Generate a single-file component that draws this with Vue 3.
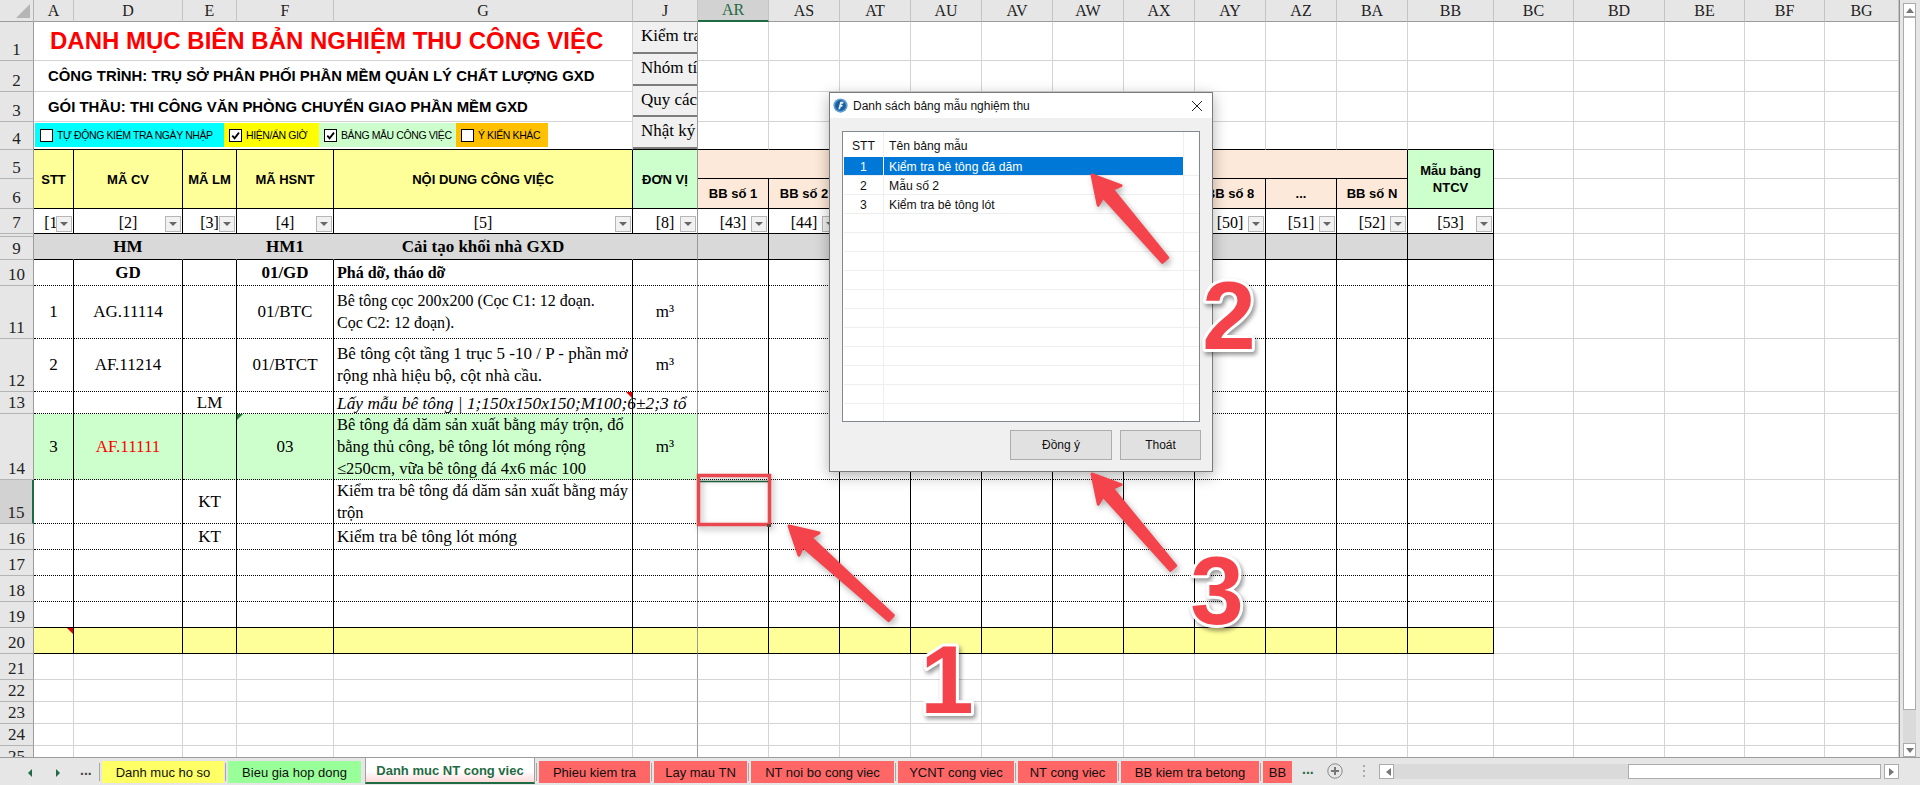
<script setup>
const colNames = ['', 'A', 'D', 'E', 'F', 'G', 'J', 'AR', 'AS', 'AT', 'AU', 'AV', 'AW', 'AX', 'AY', 'AZ', 'BA', 'BB', 'BC', 'BD', 'BE', 'BF', 'BG']
const rowLabels = ['', 1, 2, 3, 4, 5, 6, 7, 9, 10, 11, 12, 13, 14, 15, 16, 17, 18, 19, 20, 21, 22, 23, 24, 25]

const bbLabels = ['BB số 1', 'BB số 2', 'BB số 3', 'BB số 4', 'BB số 5', 'BB số 6', 'BB số 7', 'BB số 8', '...', 'BB số N']
const idx = ['[1]', '[2]', '[3]', '[4]', '[5]', '[8]', '[43]', '[44]', '[45]', '[46]', '[47]', '[48]', '[49]', '[50]', '[51]', '[52]', '[53]']

const body = {
  9: { cls: 'b', 3: 'HM', 5: 'HM1', 6: 'Cải tạo khối nhà GXD' },
  10: { cls: 'b', 3: 'GD', 5: '01/GD', 6: ['Phá dỡ, tháo dỡ'] },
  11: { 2: '1', 3: 'AG.11114', 5: '01/BTC', 6: ['Bê tông cọc 200x200 (Cọc C1: 12 đoạn.', 'Cọc C2: 12 đoạn).'], 7: 'm³' },
  12: { 2: '2', 3: 'AF.11214', 5: '01/BTCT', 6: ['Bê tông cột tầng 1 trục 5 -10 / P - phần mở', 'rộng nhà hiệu bộ, cột nhà cầu.'], 7: 'm³' },
  13: { 4: 'LM', 6: ['Lấy mẫu bê tông | 1;150x150x150;M100;6±2;3 tổ'] },
  14: { 2: '3', 3: 'AF.11111', 5: '03', 6: ['Bê tông đá dăm sản xuất bằng máy trộn, đổ', 'bằng thủ công, bê tông lót móng rộng', '≤250cm, vữa bê tông đá 4x6 mác 100'], 7: 'm³' },
  15: { 4: 'KT', 6: ['Kiểm tra bê tông đá dăm sản xuất bằng máy', 'trộn'] },
  16: { 4: 'KT', 6: ['Kiểm tra bê tông lót móng'] },
}
const gSize = { 10: 'g16', 11: 'g16', 12: 'g17', 13: 'g174', 14: 'g165', 15: 'g165', 16: 'g17' }

function borders(r, c) {
  const out = []
  if (c === 7) out.push('freeze')
  else if (r >= 6 && r <= 20 && c >= 2 && c <= 18) out.push(r === 9 && c < 7 ? 'nor' : 'vr')
  if (r >= 5 && r <= 9 && c >= 2 && c <= 18) out.push('hs')
  if ((r === 19 || r === 20) && c >= 2 && c <= 18) out.push('hs')
  if (r >= 10 && r <= 18 && c >= 2 && c <= 18) out.push('hd')
  return out
}

function cell(r, c, extra = {}) {
  const { cs = 1, rs = 1 } = extra
  const endC = c + cs - 1
  const endR = r + rs - 1
  return {
    key: r + '-' + c,
    pos: { gridColumn: c + ' / span ' + cs, gridRow: r + ' / span ' + rs },
    cls: [...borders(endR, endC), ...(extra.cls || [])],
    text: extra.text,
    lines: extra.lines,
    kind: extra.kind,
    dd: extra.dd,
  }
}

const colHeads = colNames.slice(1).map((name, i) => ({
  key: 'h' + i,
  name,
  pos: { gridColumn: i + 2, gridRow: 1 },
  active: name === 'AR',
}))
const rowHeads = rowLabels.slice(1).map((label, i) => ({
  label,
  pos: { gridRow: i + 2, gridColumn: 1 },
  active: label === 15,
}))

function buildBody() {
  const list = []
  list.push(cell(2, 2, { cs: 5, kind: 'title', text: 'DANH MỤC BIÊN BẢN NGHIỆM THU CÔNG VIỆC' }))
  list.push(cell(3, 2, { cs: 5, kind: 'sub', text: 'CÔNG TRÌNH: TRỤ SỞ PHÂN PHỐI PHẦN MỀM QUẢN LÝ CHẤT LƯỢNG GXD' }))
  list.push(cell(4, 2, { cs: 5, kind: 'sub', text: 'GÓI THẦU: THI CÔNG VĂN PHÒNG CHUYỂN GIAO PHẦN MỀM GXD' }))
  list.push(cell(5, 2, { cs: 5, kind: 'chips' }))
  list.push(cell(2, 7, { rs: 4, kind: 'buttons' }))
  ;['STT', 'MÃ CV', 'MÃ LM', 'MÃ HSNT', 'NỘI DUNG CÔNG VIỆC'].forEach((t, i) => {
    list.push(cell(6, i + 2, { rs: 2, text: t, cls: ['hd-cell', 'yellow'] }))
  })
  list.push(cell(6, 7, { rs: 2, text: 'ĐƠN VỊ', cls: ['hd-cell', 'green'] }))
  list.push(cell(6, 8, { cs: 10, cls: ['peach'] }))
  bbLabels.forEach((t, i) => list.push(cell(7, 8 + i, { text: t, cls: ['hd-cell', 'peach'] })))
  list.push(cell(6, 18, { rs: 2, lines: ['Mẫu bảng', 'NTCV'], cls: ['hd-cell', 'green'] }))
  idx.forEach((t, i) => {
    list.push(cell(8, i + 2, { text: t, dd: true, cls: ['cen', 'serif', 'idx'] }))
  })
  for (let r = 9; r <= 20; r++) {
    const data = body[r] || {}
    for (let c = 2; c <= 18; c++) {
      const v = data[c]
      const cls = []
      if (r === 9) cls.push('gray')
      if (r === 14 && c <= 7) cls.push('green')
      if (r === 20) cls.push('yellow')
      if (data.cls) cls.push(data.cls)
      if (r === 13 && c === 6) cls.push('ital', 'tri-red-r')
      if (r === 14 && c === 5) cls.push('tri-green')
      if (r === 14 && c === 3) cls.push('redtext')
      if (r === 20 && c === 2) cls.push('tri-red-r')
      if (Array.isArray(v)) list.push(cell(r, c, { lines: v, cls: [...cls, 'left', 'serif', gSize[r]] }))
      else list.push(cell(r, c, { text: v, cls: [...cls, 'cen', 'serif', 'g17'] }))
    }
  }
  for (let r = 2; r <= 25; r++) {
    for (let c = 8; c <= 23; c++) {
      if (r >= 6 && r <= 20 && c <= 18) continue
      list.push(cell(r, c))
    }
  }
  for (let r = 21; r <= 25; r++) {
    for (let c = 2; c <= 7; c++) list.push(cell(r, c))
  }
  for (let r = 6; r <= 20; r++) {
    for (let c = 19; c <= 23; c++) list.push(cell(r, c))
  }
  return list
}
const bodyCells = buildBody()

const chips = [
  { text: 'TỰ ĐỘNG KIỂM TRA NGÀY NHẬP', on: false, cls: 'cy' },
  { text: 'HIỆN/ẨN GIỜ', on: true, cls: 'ye' },
  { text: 'BẢNG MẪU CÔNG VIỆC', on: true, cls: 'gr' },
  { text: 'Ý KIẾN KHÁC', on: false, cls: 'or' },
]
const sideButtons = ['Kiểm tra ngày', 'Nhóm tính', 'Quy cách', 'Nhật ký']

const tabs = [
  { t: 'Danh muc ho so', w: 122, c: 'ty' },
  { t: 'Bieu gia hop dong', w: 133, c: 'tg' },
  { t: 'Danh muc NT cong viec', w: 170, c: 'ta' },
  { t: 'Phieu kiem tra', w: 111, c: 'tr' },
  { t: 'Lay mau TN', w: 93, c: 'tr' },
  { t: 'NT noi bo cong viec', w: 143, c: 'tr' },
  { t: 'YCNT cong viec', w: 116, c: 'tr' },
  { t: 'NT cong viec', w: 99, c: 'tr' },
  { t: 'BB kiem tra betong', w: 138, c: 'tr' },
  { t: 'BB', w: 29, c: 'tr' },
]

const listRows = [
  { n: '1', t: 'Kiểm tra bê tông đá dăm', sel: true },
  { n: '2', t: 'Mẫu số 2' },
  { n: '3', t: 'Kiểm tra bê tông lót' },
  ...Array.from({ length: 11 }, () => ({ n: '', t: '' })),
]

function arrowPoints(tx, ty, ex, ey) {
  const len = Math.hypot(ex - tx, ey - ty)
  const ux = (ex - tx) / len
  const uy = (ey - ty) / len
  const px = uy
  const py = -ux
  const at = (d, w) => [tx + ux * d + px * w, ty + uy * d + py * w].map((v) => v.toFixed(1)).join(',')
  return [at(0, 0), at(27, 15), at(24, 6), at(len, 3.5), at(len, -3.5), at(24, -6), at(27, -15)].join(' ')
}
const arrows = [
  arrowPoints(1092, 175, 1165, 260),
  arrowPoints(1092, 474, 1173, 568),
  arrowPoints(789, 526, 891, 618),
]
</script>

<template>
  <div class="app">
    <div class="main">
      <div class="sheet">
        <div class="corner"><span class="corner-tri"></span></div>
        <div v-for="h in colHeads" :key="h.key" class="colh" :class="{ act: h.active, dbl: h.name === 'A' }" :style="h.pos">{{ h.name }}</div>
        <div v-for="h in rowHeads" :key="h.label" class="rowh" :class="{ act: h.active, dbl: h.label === 9 }" :style="h.pos">{{ h.label }}</div>

        <div v-for="c in bodyCells" :key="c.key" class="c" :class="c.cls" :style="c.pos">
          <span v-if="c.kind === 'title'" class="title">{{ c.text }}</span>
          <span v-else-if="c.kind === 'sub'" class="sub">{{ c.text }}</span>
          <div v-else-if="c.kind === 'chips'" class="chips">
            <div v-for="ch in chips" :key="ch.text" class="chip" :class="ch.cls">
              <span class="cb">
                <svg v-if="ch.on" viewBox="0 0 12 12" width="11" height="11"><path d="M2.5 6.2 L5 9 L9.8 2.8" fill="none" stroke="#000" stroke-width="2"/></svg>
              </span>
              <span class="chip-t">{{ ch.text }}</span>
            </div>
          </div>
          <div v-else-if="c.kind === 'buttons'" class="sidebtns">
            <div v-for="b in sideButtons" :key="b" class="sidebtn">{{ b }}</div>
          </div>
          <template v-else>
            <div v-if="c.lines" class="lines">
              <div v-for="l in c.lines" :key="l">{{ l }}</div>
            </div>
            <span v-else-if="c.text" class="tx">{{ c.text }}</span>
            <span v-if="c.dd" class="dd"><i></i></span>
          </template>
        </div>
      </div>

      <div class="vscroll">
        <div class="sbtn"><i class="up"></i></div>
        <div class="vthumb"></div>
        <div class="vtrack"></div>
        <div class="sbtn"><i class="down"></i></div>
      </div>
    </div>

    <div class="tabbar">
      <div class="nav">
        <i class="navl"></i>
        <i class="navr"></i>
        <span class="more">...</span>
      </div>
      <div class="tabs">
        <div v-for="t in tabs" :key="t.t" class="tab" :class="t.c" :style="{ width: t.w + 'px' }">{{ t.t }}</div>
      </div>
      <span class="more green-more">...</span>
      <span class="plus">
        <svg viewBox="0 0 16 16" width="16" height="16"><circle cx="8" cy="8" r="7.2" fill="none" stroke="#8a8a8a" stroke-width="1"/><path d="M8 4v8M4 8h8" stroke="#777" stroke-width="2"/></svg>
      </span>
      <span class="vdots"></span>
      <div class="hscroll">
        <div class="hbtn"><i class="left"></i></div>
        <div class="htrack"></div>
        <div class="hthumb"></div>
        <div class="hbtn"><i class="right"></i></div>
      </div>
    </div>

    <div class="dialog">
      <div class="dtitle">
        <svg class="dicon" viewBox="0 0 16 16" width="15" height="15">
          <circle cx="8" cy="8" r="7.6" fill="#5f9fd4"/>
          <circle cx="8" cy="8" r="5.8" fill="#1b5f9e"/>
          <path d="M5.6 12 L7.8 4 H11.4 L10.7 6.2 H9.2 L8.9 7.4 H10.4 L9.8 9.4 H8.3 L7.6 12 Z" fill="#e6eff6"/>
        </svg>
        <span class="dtitle-t">Danh sách bảng mẫu nghiệm thu</span>
        <svg class="dclose" viewBox="0 0 12 12" width="12" height="12"><path d="M1 1 L11 11 M11 1 L1 11" stroke="#222" stroke-width="1"/></svg>
      </div>
      <div class="dbody">
        <div class="dlist">
          <div class="lrow lhead"><span class="ln">STT</span><span class="lt">Tên bảng mẫu</span><span class="lx"></span></div>
          <div v-for="(r, i) in listRows" :key="i" class="lrow" :class="{ sel: r.sel }">
            <span class="ln">{{ r.n }}</span><span class="lt">{{ r.t }}</span><span class="lx"></span>
          </div>
        </div>
        <div class="dbtns">
          <button class="dbtn ok">Đồng ý</button>
          <button class="dbtn ex">Thoát</button>
        </div>
      </div>
    </div>

    <svg class="marks" viewBox="0 0 1920 785" width="1920" height="785">
      <g class="shadowed">
        <rect x="698.5" y="475.5" width="71" height="49" fill="none" stroke="#e8484e" stroke-width="3.5"/>
      </g>
      <path d="M700 481.5H768" stroke="#1f5d3a" stroke-width="1.5"/>
      <rect x="767" y="524" width="4" height="3" fill="#5a4a40"/>
      <g class="shadowed">
        <polygon v-for="(p, i) in arrows" :key="i" :points="p" fill="#f4434b" stroke="#f4434b" stroke-width="3" stroke-linejoin="round"/>
      </g>
      <g class="nums">
        <text x="947" y="713" text-anchor="middle">1</text>
        <text x="1229" y="349" text-anchor="middle">2</text>
        <text x="1217" y="624" text-anchor="middle">3</text>
      </g>
    </svg>
  </div>
</template>

<style>
html, body { margin: 0; padding: 0; background: #fff; }
</style>

<style scoped>
.app {
  position: relative;
  width: 1920px;
  height: 785px;
  overflow: hidden;
  display: flex;
  flex-direction: column;
  background: #e6e6e6;
  font-family: "Liberation Serif", serif;
  color: #000;
}
.main { display: flex; height: 757px; flex: none; }
.sheet {
  display: grid;
  grid-template-columns: 34px 40px 109px 54px 97px 299px 65px repeat(10, 71px) 86px 80px 91px 80px 80px 74px;
  grid-template-rows: 22px 39px 31px 30px 28px 29px 30px 25px 26px 26px 53px 53px 22px 66px 44px 26px 26px 26px 26px 26px 26px 22px 22px 22px 22px;
  width: 1899px;
  height: 757px;
  overflow: hidden;
  background: #fff;
}
.corner {
  grid-column: 1; grid-row: 1;
  background: #e6e6e6;
  border-right: 1px solid #b4b4b4;
  border-bottom: 1px solid #9c9c9c;
  box-sizing: border-box;
  position: relative;
}
.corner-tri {
  position: absolute; right: 3px; bottom: 3px;
  border-left: 14px solid transparent;
  border-bottom: 14px solid #b5b5b5;
}
.colh {
  box-sizing: border-box;
  background: #e6e6e6;
  border-right: 1px solid #c4c4c4;
  border-bottom: 1px solid #9c9c9c;
  display: flex; align-items: center; justify-content: center;
  font-size: 16px;
  color: #222;
  position: relative;
}
.colh.act {
  background: #d2d2d2;
  color: #1f6b43;
  border-bottom: 2px solid #1f6b43;
}
.colh.dbl::after {
  content: "";
  position: absolute;
  right: -3px; top: 0; bottom: 0;
  width: 1px;
  background: #c4c4c4;
}
.rowh {
  box-sizing: border-box;
  background: #e6e6e6;
  border-right: 1px solid #9c9c9c;
  border-bottom: 1px solid #b4b4b4;
  display: flex; align-items: flex-end; justify-content: center;
  font-size: 17px;
  line-height: 20px;
  color: #222;
  position: relative;
}
.rowh.dbl::before {
  content: "";
  position: absolute;
  left: 0; right: 0; top: 2px;
  height: 1px;
  background: #b4b4b4;
}
.rowh.act {
  background: #d2d2d2;
  border-right: 2px solid #1f6b43;
}
.c {
  box-sizing: border-box;
  min-width: 0;
  position: relative;
  border-right: 1px solid #d4d4d4;
  border-bottom: 1px solid #d4d4d4;
  display: flex;
  align-items: center;
}
.freeze { border-right: 1px solid #9a9a9a; }
.vr { border-right: 1px solid #000; }
.nor { border-right-color: transparent; }
.hs { border-bottom: 1px solid #000; }
.hd { border-bottom: 1px dotted #000; }
.yellow { background: #ffff99; }
.green { background: #ccffcc; }
.peach { background: #fde9d9; }
.gray { background: #d9d9d9; }
.redtext { color: #f00; }
.cen { justify-content: center; }
.left { justify-content: flex-start; padding-left: 3px; }
.serif { font-family: "Liberation Serif", serif; font-size: 16px; }
.idx { padding-top: 3px; }
.g16 { font-size: 16px; }
.g165 { font-size: 16.5px; }
.g17 { font-size: 17px; }
.g174 { font-size: 17.4px; }
.tx { white-space: nowrap; }
.b { font-weight: 700; }
.ital { font-style: italic; }
.lines { line-height: 22px; white-space: nowrap; }
.hd-cell {
  justify-content: center;
  text-align: center;
  font-family: "Liberation Sans", sans-serif;
  font-weight: 700;
  font-size: 13px;
}
.hd-cell .lines { line-height: 17px; }
.title {
  font-family: "Liberation Sans", sans-serif;
  font-weight: 700;
  font-size: 24px;
  color: #f00;
  padding-left: 16px;
  white-space: nowrap;
}
.sub {
  font-family: "Liberation Sans", sans-serif;
  font-weight: 700;
  font-size: 14.9px;
  padding-left: 14px;
  white-space: nowrap;
}
.chips {
  display: flex;
  align-self: flex-start;
  margin: 1px 0 0 1px;
  height: 24px;
  font-family: "Liberation Sans", sans-serif;
  font-size: 10.5px;
  letter-spacing: -0.4px;
}
.chip { display: flex; align-items: center; box-sizing: border-box; padding-left: 5px; gap: 4px; white-space: nowrap; }
.chip.cy { width: 189px; background: #00ffff; }
.chip.ye { width: 95px; background: #ffff00; }
.chip.gr { width: 137px; background: #ccffcc; }
.chip.or { width: 92px; background: #ffc000; }
.cb {
  width: 13px; height: 13px;
  box-sizing: border-box;
  border: 1px solid #000;
  background: #fff;
  display: flex; align-items: center; justify-content: center;
  flex: none;
}
.sidebtns { display: flex; flex-direction: column; width: 64px; height: 100%; overflow: hidden; }
.sidebtn {
  flex: 1;
  box-sizing: border-box;
  background: #f0f0f0;
  border-bottom: 2px solid #7d7d7d;
  padding: 2px 0 0 8px;
  font-size: 17px;
  line-height: 24px;
  white-space: nowrap;
  overflow: hidden;
}
.dd {
  position: absolute;
  right: 1px; bottom: 1px;
  width: 16px; height: 16px;
  box-sizing: border-box;
  background: #f1f1f1;
  border: 1px solid #b6b6b6;
  display: flex; align-items: center; justify-content: center;
}
.dd i {
  border-left: 4px solid transparent;
  border-right: 4px solid transparent;
  border-top: 4px solid #666;
}
.tri-red-r::after {
  content: ""; position: absolute; right: 0; top: 0;
  border-left: 6px solid transparent;
  border-top: 6px solid #e00000;
}
.tri-green::after {
  content: ""; position: absolute; left: 0; top: 0;
  border-right: 6px solid transparent;
  border-top: 6px solid #1d7a2c;
}

.vscroll {
  width: 21px;
  box-sizing: border-box;
  border-left: 1px solid #8e8e8e;
  padding: 3px 4px 0 3px;
  display: flex;
  flex-direction: column;
  background: #e6e6e6;
}
.sbtn {
  height: 14px; flex: none;
  box-sizing: border-box;
  background: #fff;
  border: 1px solid #ababab;
  display: flex; align-items: center; justify-content: center;
}
.sbtn .up { border-left: 4px solid transparent; border-right: 4px solid transparent; border-bottom: 5px solid #777; }
.sbtn .down { border-left: 4px solid transparent; border-right: 4px solid transparent; border-top: 5px solid #777; }
.vthumb { height: 693px; flex: none; background: #fff; border: 1px solid #ababab; box-sizing: border-box; }
.vtrack { flex: 1; background: #dadada; }

.tabbar {
  height: 28px;
  flex: none;
  border-top: 1px solid #9c9c9c;
  box-sizing: border-box;
  display: flex;
  align-items: flex-start;
  position: relative;
  font-family: "Liberation Sans", sans-serif;
}
.nav { width: 102px; height: 24px; margin-top: 3px; display: flex; align-items: center; position: relative; flex: none; }
.navl { position: absolute; left: 28px; border-top: 4px solid transparent; border-bottom: 4px solid transparent; border-right: 4px solid #1f6b43; }
.navr { position: absolute; left: 56px; border-top: 4px solid transparent; border-bottom: 4px solid transparent; border-left: 4px solid #1f6b43; }
.more { position: absolute; left: 80px; font-size: 14px; font-weight: 700; color: #444; top: 1px; }
.tabs { display: flex; gap: 4px; flex: none; margin-top: 3px; }
.tab {
  height: 22px;
  box-sizing: border-box;
  display: flex; align-items: center; justify-content: center;
  font-size: 13px;
  color: #111;
  white-space: nowrap;
  flex: none;
  position: relative;
}
.tab::before {
  content: "";
  position: absolute;
  left: -3px; top: 2px; bottom: 2px;
  width: 1px;
  background: #a8a8a8;
}
.ty { background: #ffff66; }
.tg { background: #99ff99; }
.tr { background: #ff6666; }
.ta {
  height: 26px;
  margin-top: -3px;
  background: linear-gradient(#fff 55%, #ffd9d9);
  border-left: 1px solid #a0a0a0;
  border-right: 1px solid #a0a0a0;
  border-bottom: 2px solid #1f6b43;
  color: #1f6b43;
  font-weight: 700;
}
.ta::before { display: none; }
.green-more { position: static; margin: 3px 0 0 10px; color: #1f6b43; flex: none; }
.plus { margin: 5px 0 0 13px; flex: none; display: flex; }
.vdots {
  width: 2px; height: 13px; margin: 7px 0 0 20px; flex: none;
  background: repeating-linear-gradient(#aaa 0 2px, transparent 2px 5px);
}
.hscroll { position: absolute; left: 1379px; top: 6px; width: 520px; height: 15px; display: flex; }
.hbtn {
  width: 15px; height: 15px; flex: none; box-sizing: border-box;
  background: #fff; border: 1px solid #ababab;
  display: flex; align-items: center; justify-content: center;
}
.hbtn .left { border-top: 4px solid transparent; border-bottom: 4px solid transparent; border-right: 5px solid #777; }
.hbtn .right { border-top: 4px solid transparent; border-bottom: 4px solid transparent; border-left: 5px solid #777; }
.htrack { width: 234px; flex: none; background: #dadada; }
.hthumb { width: 253px; flex: none; background: #fff; border: 1px solid #ababab; box-sizing: border-box; margin-right: 3px; }

.dialog {
  position: absolute;
  left: 829px; top: 92px;
  width: 384px; height: 380px;
  box-sizing: border-box;
  border: 1px solid #7a7a7a;
  background: #f0f0f0;
  box-shadow: 0 4px 14px rgba(0, 0, 0, 0.3);
  display: flex;
  flex-direction: column;
  font-family: "Liberation Sans", sans-serif;
  font-size: 12.2px;
  color: #111;
}
.dtitle { height: 25px; background: #fff; display: flex; align-items: center; flex: none; padding: 0 9px 0 3px; font-size: 12px; }
.dicon { flex: none; }
.dtitle-t { margin-left: 5px; flex: 1; }
.dclose { flex: none; }
.dbody { flex: 1; display: flex; flex-direction: column; padding: 13px 12px 11px; }
.dlist {
  height: 291px;
  box-sizing: border-box;
  border: 1px solid #828790;
  background: #fff;
  overflow: hidden;
  padding-left: 1px;
}
.lrow {
  display: flex;
  height: 19px;
  box-sizing: border-box;
  border-bottom: 1px solid #eeeeee;
  align-items: center;
}
.lhead { height: 25px; border-bottom: none; }
.ln { width: 40px; height: 100%; padding-top: 2px; display: flex; align-items: center; justify-content: center; flex: none; box-sizing: border-box; border-right: 1px solid #eeeeee; }
.lt { width: 300px; height: 100%; padding: 2px 0 0 5px; display: flex; align-items: center; box-sizing: border-box; flex: none; border-right: 1px solid #eeeeee; }
.lx { flex: 1; }
.sel .ln, .sel .lt { background: #0078d7; color: #fff; border-right-color: #fff; }
.dbtns { display: flex; justify-content: flex-end; gap: 8px; margin-top: 8px; margin-right: -1px; }
.dbtn {
  height: 30px;
  box-sizing: border-box;
  background: #e1e1e1;
  border: 1px solid #adadad;
  font-family: "Liberation Sans", sans-serif;
  font-size: 12px;
  color: #111;
  padding: 0;
}
.dbtn.ok { width: 102px; }
.dbtn.ex { width: 81px; }

.marks { position: absolute; left: 0; top: 0; pointer-events: none; }
.shadowed { filter: drop-shadow(2px 3px 3px rgba(0, 0, 0, 0.3)); }
.nums text {
  font-family: "Liberation Sans", sans-serif;
  font-weight: 700;
  font-size: 96px;
  fill: #f4434b;
  stroke: #fff;
  stroke-width: 6px;
  paint-order: stroke;
  stroke-linejoin: round;
  filter: drop-shadow(2px 3px 2px rgba(0, 0, 0, 0.4));
}
</style>
